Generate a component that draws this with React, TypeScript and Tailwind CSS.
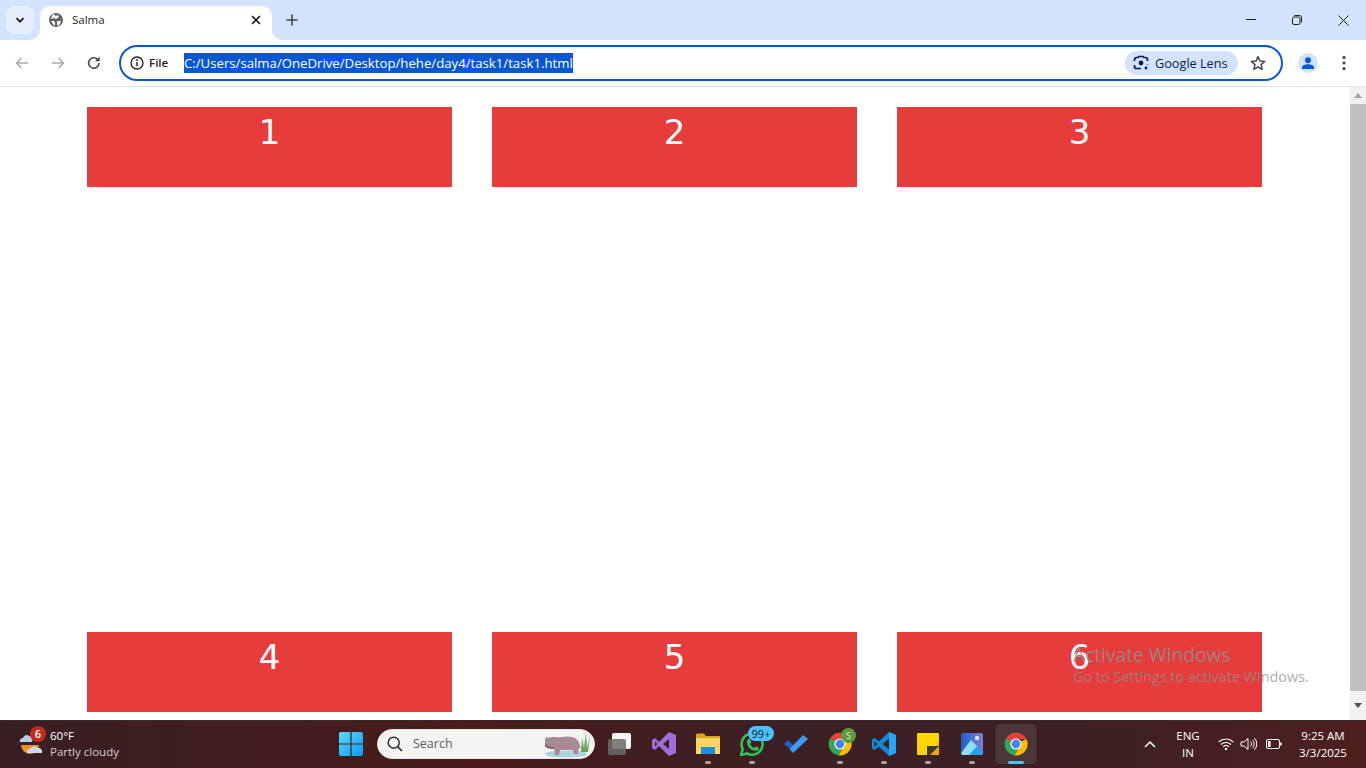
import React from "react";

const font = { fontFamily: '"Open Sans", "Noto Sans", sans-serif' };

function Card({ n }: { n: number }) {
  return (
    <div className="h-[80px] bg-[#e73c3c] text-white text-center text-[34px] leading-[50px] font-['DejaVu_Sans',sans-serif]">{n}</div>
  );
}

function Dot() {
  return <span className="absolute bottom-[4px] left-1/2 -translate-x-1/2 w-[6px] h-[3px] rounded-full bg-[#a8a3a3]" />;
}

function ChromeIcon() {
  return (
    <svg width="24" height="24" viewBox="0 0 24 24">
      <path d="M12 12 L2.2 6.3 A11.5 11.5 0 0 1 22.4 7 L12 7 Z" fill="#ea4335" />
      <path d="M12 12 L2.2 6.3 A11.5 11.5 0 0 0 10.5 23.4 L15.5 15 Z" fill="#34a853" />
      <path d="M12 12 L22.4 7 A11.5 11.5 0 0 1 10.5 23.4 L16.4 14 Z" fill="#fbbc04" />
      <circle cx="12" cy="12" r="5.6" fill="#fff" />
      <circle cx="12" cy="12" r="4.4" fill="#4285f4" />
    </svg>
  );
}

function Slot({ children, dot = false, active = false }: { children: React.ReactNode; dot?: boolean; active?: boolean }) {
  return (
    <div className="relative w-[44px] h-[48px] flex items-center justify-center">
      {active && <span className="absolute left-[2px] top-[4px] w-[40px] h-[40px] rounded-[4px] bg-[#4a3538] border border-[#503d40]" />}
      <span className="relative flex">{children}</span>
      {dot && !active && <Dot />}
      {active && <span className="absolute bottom-[4px] left-1/2 -translate-x-1/2 w-[16px] h-[3px] rounded-full bg-[#4cc2ff]" />}
    </div>
  );
}

export default function App() {
  return (
    <div className="w-[1366px] h-[768px] overflow-hidden flex flex-col bg-white" style={font}>
      {/* tab strip */}
      <div className="h-[40px] shrink-0 bg-[#d3e3fd] flex items-end relative">
        <div className="absolute left-[6px] top-[6px] w-[28px] h-[28px] rounded-[8px] bg-[#e6eefc] flex items-center justify-center">
          <svg width="12" height="12" viewBox="0 0 12 12"><path d="M2.5 4.2 L6 7.7 L9.5 4.2" fill="none" stroke="#1f1f1f" strokeWidth="1.8" /></svg>
        </div>
        <div className="ml-[40px] w-[232px] h-[34px] pb-[6px] bg-white rounded-t-[10px] flex items-center relative">
          <svg className="absolute left-[-10px] bottom-0" width="10" height="10" viewBox="0 0 10 10"><path d="M10 0 V10 H0 A10 10 0 0 0 10 0 Z" fill="#fff" /></svg>
          <svg className="absolute right-[-10px] bottom-0" width="10" height="10" viewBox="0 0 10 10"><path d="M0 0 V10 H10 A10 10 0 0 1 0 0 Z" fill="#fff" /></svg>
          <svg className="ml-[9px]" width="14" height="14" viewBox="0 0 14 14">
            <circle cx="7" cy="7" r="7" fill="#5f6368" />
            <path d="M4 1 L7 3 L9 2 L10 4 L7 6 L5 5 L2 6 L3 3 Z M8 8 L12 8 L11 11 L9 13 L8 11 Z M2 8 L5 8 L6 10 L6 13 L4 11 Z" fill="#fff" />
          </svg>
          <span className="ml-[9px] text-[11.5px] text-[#1f1f1f] leading-none">Salma</span>
          <svg className="absolute right-[10px] top-[8px]" width="12" height="12" viewBox="0 0 12 12"><path d="M2 2 L10 10 M10 2 L2 10" stroke="#1f1f1f" strokeWidth="1.7" /></svg>
        </div>
        <svg className="ml-[14px] mb-[14px]" width="12" height="12" viewBox="0 0 12 12"><path d="M6 .5 V11.5 M.5 6 H11.5" stroke="#444746" strokeWidth="1.6" /></svg>
        <div className="ml-auto flex items-center h-[40px] text-[#1f1f1f]">
          <div className="w-[46px] flex justify-center">
            <svg width="10" height="10" viewBox="0 0 10 10"><path d="M0 4.5 H10" stroke="#1f1f1f" strokeWidth="1" /></svg>
          </div>
          <div className="w-[46px] flex justify-center">
            <svg width="10" height="10" viewBox="0 0 10 10"><rect x=".5" y="2" width="7.5" height="7.5" rx="1.5" fill="none" stroke="#1f1f1f" /><path d="M2.5 .5 H7.5 A2 2 0 0 1 9.5 2.5 V7.5" fill="none" stroke="#1f1f1f" /></svg>
          </div>
          <div className="w-[46px] flex justify-center">
            <svg width="11" height="11" viewBox="0 0 11 11"><path d="M.5 .5 L10.5 10.5 M10.5 .5 L.5 10.5" stroke="#1f1f1f" /></svg>
          </div>
        </div>
      </div>

      {/* toolbar */}
      <div className="h-[47px] shrink-0 bg-white rounded-t-[8px] border-b border-[#e3e3e3] flex items-center relative pb-[1px]">
        <div className="w-[119px] shrink-0 flex items-center">
          <svg className="ml-[14px]" width="16" height="16" viewBox="0 0 16 16"><path d="M14 8 H2.5 M7.5 3 L2.5 8 L7.5 13" fill="none" stroke="#a9abac" strokeWidth="1.5" /></svg>
          <svg className="ml-[20px]" width="16" height="16" viewBox="0 0 16 16"><path d="M2 8 H13.5 M8.5 3 L13.5 8 L8.5 13" fill="none" stroke="#a9abac" strokeWidth="1.5" /></svg>
          <svg className="ml-[20px]" width="16" height="16" viewBox="0 0 16 16"><path d="M13 8 A5.2 5.2 0 1 1 11.4 4.2" fill="none" stroke="#444746" strokeWidth="1.6" /><path d="M13.6 1.6 V6.2 H9 Z" fill="#444746" /></svg>
        </div>
        <div className="w-[1164px] h-[36px] shrink-0 rounded-full border-2 border-[#0b57d0] flex items-center">
          <svg className="ml-[9px]" width="14" height="14" viewBox="0 0 14 14"><circle cx="7" cy="7" r="6" fill="none" stroke="#1f1f1f" strokeWidth="1.3" /><path d="M7 6 V10.3" stroke="#1f1f1f" strokeWidth="1.4" /><circle cx="7" cy="4" r=".9" fill="#1f1f1f" /></svg>
          <span className="ml-[5px] w-[19px] text-[11.5px] font-semibold text-[#1f1f1f] leading-none">File</span>
          <span className="ml-[16px] h-[20px] px-0 bg-[#0b57d0] text-white text-[13.2px] leading-[20px] whitespace-nowrap">C:/Users/salma/OneDrive/Desktop/hehe/day4/task1/task1.html</span>
          <div className="ml-auto mr-[43px] w-[113px] h-[24px] rounded-full bg-[#d3e3fd] flex items-center">
            <svg className="ml-[8px]" width="16" height="16" viewBox="0 0 16 16">
              <path d="M1.5 6 V4.5 A2 2 0 0 1 3.5 2.5 H5 L6 1.5 H10 L11 2.5 H12.5 A2 2 0 0 1 14.5 4.5 V6 M1.5 10 V11.5 A2 2 0 0 0 3.5 13.5 H8 " fill="none" stroke="#041e49" strokeWidth="1.7" />
              <path d="M14.5 9.5 V9" stroke="#041e49" strokeWidth="1.7" />
              <circle cx="8" cy="8" r="2.4" fill="#041e49" />
              <circle cx="13" cy="13" r="1.4" fill="#041e49" />
            </svg>
            <span className="ml-[6px] pt-[2px] text-[12.7px] text-[#041e49] leading-none whitespace-nowrap">Google Lens</span>
          </div>
          <svg className="absolute right-[100px]" width="16" height="16" viewBox="0 0 16 16"><path d="M8 1.6 L9.9 6 L14.7 6.4 L11.1 9.6 L12.1 14.3 L8 11.8 L3.9 14.3 L4.9 9.6 L1.3 6.4 L6.1 6 Z" fill="none" stroke="#444746" strokeWidth="1.5" strokeLinejoin="round" /></svg>
        </div>
        <div className="ml-[15px] w-[20px] h-[20px] rounded-full bg-[#d3e3fd] flex items-center justify-center">
          <svg width="14" height="14" viewBox="0 0 14 14"><circle cx="7" cy="4.2" r="3" fill="#0b57d0" /><path d="M1 13 V11.5 C1 9.3 4 8.2 7 8.2 C10 8.2 13 9.3 13 11.5 V13 Z" fill="#0b57d0" /></svg>
        </div>
        <svg className="ml-[24px]" width="4" height="16" viewBox="0 0 4 16"><circle cx="2" cy="2.4" r="1.6" fill="#444746" /><circle cx="2" cy="8" r="1.6" fill="#444746" /><circle cx="2" cy="13.6" r="1.6" fill="#444746" /></svg>
      </div>

      {/* page */}
      <div className="h-[633px] shrink-0 flex relative">
        <div className="w-[1350px] pt-[20px] pl-[87px] pr-[88px] pb-[8px] flex flex-col justify-between">
          <div className="grid grid-cols-3 gap-x-[40px]"><Card n={1} /><Card n={2} /><Card n={3} /></div>
          <div className="grid grid-cols-3 gap-x-[40px]"><Card n={4} /><Card n={5} /><Card n={6} /></div>
        </div>
        <div className="w-[16px] bg-[#f1f1f1] flex flex-col items-center">
          <div className="h-[17px] flex items-center justify-center">
            <svg width="8" height="5" viewBox="0 0 8 5"><path d="M4 0 L8 5 H0 Z" fill="#a3a3a3" /></svg>
          </div>
          <div className="w-[16px] h-[587px] bg-[#c1c1c1]" />
          <div className="h-[29px] w-full flex items-center justify-center">
            <svg width="8" height="5" viewBox="0 0 8 5"><path d="M0 0 H8 L4 5 Z" fill="#505050" /></svg>
          </div>
        </div>
        <div className="absolute left-[1073px] top-[554px] pointer-events-none whitespace-nowrap">
          <div className="text-[19.2px] leading-[27px] text-[#8f8f8f]/85">Activate Windows</div>
          <div className="text-[14.4px] leading-[18px] text-[#8f8f8f]/75">Go to Settings to activate Windows.</div>
        </div>
      </div>

      {/* taskbar */}
      <div className="h-[48px] shrink-0 flex items-center text-white bg-[linear-gradient(90deg,#381f24_0%,#4a1b1a_35%,#3b2024_58%,#3d2024_78%,#4d1f1e_100%)] shadow-[inset_0_1px_0_#3c2a2c] relative">
        <div className="w-[329px] shrink-0 flex items-center relative h-full">
          <svg className="absolute left-[17px] top-[10px]" width="30" height="28" viewBox="0 0 30 28">
            <path d="M3 12 C2 9 5 8 6 8 C7 5 11 4 12 6 C15 6 16 9 15 12 Z" fill="#b3cfec" />
            <path d="M4 15 H22 A9 9 0 0 1 4 15 Z" fill="#f0901c" />
            <path d="M10 23 C9 20 11 19 13 19 C14 16 19 15 20 18 C23 17 26 20 25 23 Z" fill="#c7dcf2" />
          </svg>
          <span className="absolute left-[30px] top-[6px] w-[16px] h-[16px] rounded-full bg-[#c42b1c] text-[11px] leading-[16px] text-center font-semibold">6</span>
          <div className="ml-[50px] flex flex-col">
            <span className="text-[11.5px] leading-[16px] text-white">60°F</span>
            <span className="text-[11.5px] leading-[16px] text-[#d5cccc]">Partly cloudy</span>
          </div>
        </div>
        <Slot>
          <svg width="24" height="24" viewBox="0 0 24 24">
            <defs><linearGradient id="win" x1="0" y1="0" x2="1" y2="1"><stop offset="0" stopColor="#5fd8fb" /><stop offset="1" stopColor="#0a9bf0" /></linearGradient></defs>
            <path d="M0 2 A2 2 0 0 1 2 0 H11.4 V11.4 H0 Z M12.6 0 H22 A2 2 0 0 1 24 2 V11.4 H12.6 Z M0 12.6 H11.4 V24 H2 A2 2 0 0 1 0 22 Z M12.6 12.6 H24 V22 A2 2 0 0 1 22 24 H12.6 Z" fill="url(#win)" />
          </svg>
        </Slot>
        <div className="ml-[4px] w-[218px] h-[30px] rounded-full bg-[#f3f3f1] flex items-center relative overflow-hidden shrink-0 border border-[#e8e8e6]">
          <svg className="ml-[9px]" width="16" height="16" viewBox="0 0 16 16"><circle cx="6.7" cy="6.7" r="5.5" fill="none" stroke="#2b2b2b" strokeWidth="1.5" /><path d="M10.7 10.7 L15 15" stroke="#2b2b2b" strokeWidth="1.7" /></svg>
          <span className="ml-[10px] pt-[1px] text-[12.5px] text-[#5d5d5d]">Search</span>
          <svg className="absolute right-0 top-0" width="52" height="28" viewBox="0 0 52 28">
            <ellipse cx="24" cy="24" rx="21" ry="3.5" fill="#a9d3e4" />
            <path d="M39 22 L40 8 L42 18 L44 3 L45 18 L48 6 L46 22 Z" fill="#6aa04e" />
            <path d="M3 9 L5 7 L7 8 C10 6 14 8 20 7 C30 5 37 8 38 16 L39 19 L37 18 L36 24 H32 L31 20 H18 L17 25 H13 L12 19 C9 19 5 19 3 16 Z" fill="#a98a93" />
            <path d="M3 13 C5 16 9 18 12 17 L12 19 C9 19 5 19 3 16 Z" fill="#7d636b" />
          </svg>
        </div>
        <div className="ml-[3px] flex">
          <Slot>
            <span className="relative block w-[24px] h-[24px]">
              <span className="absolute left-[4px] top-[1px] w-[19px] h-[16px] bg-[#f5f5f5] rounded-[2px]" />
              <span className="absolute left-0 top-[7px] w-[18px] h-[16px] bg-[#6a6a6a]/85 rounded-[2px]" />
            </span>
          </Slot>
          <Slot>
            <svg width="24" height="26" viewBox="0 0 24 26">
              <path d="M17 1 L24 4 V22 L17 25 L7 15 L3 19 L0 17 V9 L3 7 L7 11 Z M17 8 L11 13 L17 18 Z M3 10.5 V15.5 L5.5 13 Z" fill="#9a70dd" fillRule="evenodd" />
            </svg>
          </Slot>
          <Slot dot>
            <svg width="24" height="22" viewBox="0 0 24 22">
              <path d="M0 2 A1.5 1.5 0 0 1 1.5 .5 H8 L10 3 H24 V8 H0 Z" fill="#d9a520" />
              <path d="M0 5 H24 V21 H0 Z" fill="#fcd565" />
              <path d="M5 14 H19 V21 H5 Z" fill="#1e8fdc" />
            </svg>
          </Slot>
          <Slot dot>
            <span className="relative flex">
              <svg width="26" height="26" viewBox="0 0 26 26">
                <path d="M2 24 L3.7 18 A10.5 10.5 0 1 1 8 22.4 Z" fill="none" stroke="#2ec25a" strokeWidth="2.6" strokeLinejoin="round" />
                <path d="M9 8 L11 7.5 L12.5 11 L11 13 C12 15 13.5 16 15.5 17 L17 15.2 L20 17 C19.5 20 16 20.5 13 19 C9 17 6.5 11 9 8 Z" fill="#2ec25a" />
              </svg>
              <span className="absolute left-[9px] top-[-5px] w-[26px] h-[15px] rounded-full bg-[#4cc2ff] text-[#1a1a1a] text-[11px] leading-[15px] text-center">99+</span>
            </span>
          </Slot>
          <Slot>
            <svg width="24" height="18" viewBox="0 0 24 18">
              <path d="M0 9 L4 5 L9 10 L6 13.5 Z" fill="#1b62c9" />
              <path d="M9 18 L5.5 14 L19 0 L24 4 Z" fill="#3f9bf0" />
            </svg>
          </Slot>
          <Slot dot>
            <span className="relative flex">
              <ChromeIcon />
              <span className="absolute left-[13px] top-[-4px] w-[15px] h-[15px] rounded-full bg-[#5e9a3e] text-[#d8ecca] text-[9px] leading-[15px] text-center">S</span>
            </span>
          </Slot>
          <Slot dot>
            <svg width="24" height="24" viewBox="0 0 24 24">
              <path d="M17 0 L24 3 V21 L17 24 L7 14.5 L2.5 18 L0 16.5 V7.5 L2.5 6 L7 9.5 Z M17 6.5 L10.5 12 L17 17.5 Z M2.5 9 V15 L5.5 12 Z" fill="#0e8ad8" fillRule="evenodd" />
              <path d="M17 0 L24 3 V21 L17 24 Z" fill="#2aa6f0" />
            </svg>
          </Slot>
          <Slot dot>
            <span className="relative block w-[22px] h-[22px] bg-[#ffd500] rounded-[1px]">
              <svg className="absolute right-0 bottom-0" width="13" height="13" viewBox="0 0 13 13"><path d="M13 0 V13 H4 Z" fill="#e7a90c" /><path d="M1 4 H13 L4 13 H1 Z" fill="#3d3a33" /></svg>
            </span>
          </Slot>
          <Slot dot>
            <svg width="22" height="22" viewBox="0 0 22 22">
              <defs><linearGradient id="ph" x1="0" y1="0" x2="1" y2="0"><stop offset="0" stopColor="#1f5fc4" /><stop offset="1" stopColor="#7a7fd8" /></linearGradient></defs>
              <rect width="22" height="22" rx="2" fill="url(#ph)" />
              <circle cx="16" cy="5" r="2.2" fill="#dfe6fb" />
              <path d="M0 20 L10 7 L18 15 L14 22 H2 A2 2 0 0 1 0 20 Z" fill="#8fdcf5" />
              <path d="M8 22 L16 13 L22 19 V20 A2 2 0 0 1 20 22 Z" fill="#27a3df" />
            </svg>
          </Slot>
          <Slot active><ChromeIcon /></Slot>
        </div>
        <div className="absolute right-0 top-0 h-full flex items-center">
          <svg className="mr-[19px]" width="12" height="8" viewBox="0 0 12 8"><path d="M1 7 L6 2 L11 7" fill="none" stroke="#fff" strokeWidth="1.5" /></svg>
          <div className="w-[26px] flex flex-col items-center text-[11.5px] leading-[17px] text-white mr-[17px]"><span>ENG</span><span>IN</span></div>
          <svg className="mr-[6px]" width="16" height="14" viewBox="0 0 16 14"><path d="M.7 5 A10.5 10.5 0 0 1 15.3 5 M3 7.5 A7.2 7.2 0 0 1 13 7.5 M5.2 9.8 A4 4 0 0 1 10.8 9.8" fill="none" stroke="#fff" strokeWidth="1.1" /><circle cx="8" cy="12" r="1.2" fill="#fff" /></svg>
          <svg className="mr-[9px]" width="17" height="14" viewBox="0 0 17 14"><path d="M1 5 H4 L8 1.5 V12.5 L4 9 H1 Z" fill="none" stroke="#fff" strokeWidth="1" /><path d="M10.5 4.5 A3.5 3.5 0 0 1 10.5 9.5 M12.5 2.8 A6 6 0 0 1 12.5 11.2 M14.5 1.2 A8.5 8.5 0 0 1 14.5 12.8" fill="none" stroke="#fff" strokeWidth="1" /></svg>
          <svg className="mr-[6px]" width="16" height="10" viewBox="0 0 16 10"><rect x=".5" y=".5" width="13" height="9" rx="1.5" fill="none" stroke="#fff" /><rect x="2" y="2" width="2.5" height="6" fill="#fff" /><rect x="14" y="3.5" width="1.6" height="3" fill="#fff" /></svg>
          <div className="w-[70px] mr-[8px] flex flex-col items-center text-[11.5px] leading-[17px] text-white whitespace-nowrap"><span>9:25 AM</span><span>3/3/2025</span></div>
        </div>
      </div>
    </div>
  );
}
